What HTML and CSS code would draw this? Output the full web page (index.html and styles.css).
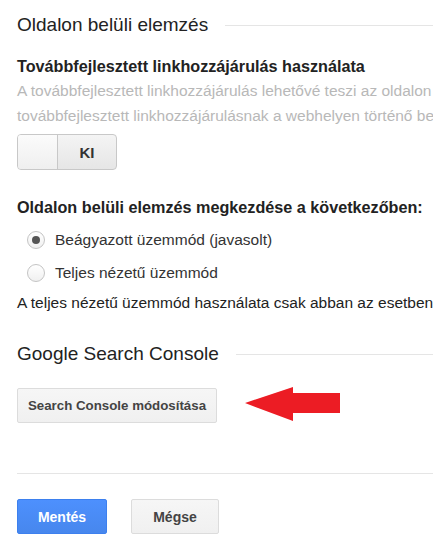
FILE: index.html
```html
<!DOCTYPE html>
<html lang="hu">
<head>
    <meta charset="UTF-8">
    <meta name="viewport" content="width=device-width, initial-scale=1.0">
    <title>Beállítások</title>
    <link rel="stylesheet" href="styles.css">
</head>
<body>

    <!-- Oldalon belüli elemzés -->
    <div class="section">
        <h2 class="section-title">Oldalon belüli elemzés</h2>

        <div class="label">Továbbfejlesztett linkhozzájárulás használata</div>
        <p class="hint">A továbbfejlesztett linkhozzájárulás lehetővé teszi az oldalon történő<br>továbbfejlesztett linkhozzájárulásnak a webhelyen történő beállítását</p>

        <div class="toggle">
            <span class="toggle-thumb"></span>
            <span class="toggle-text">KI</span>
        </div>

        <div class="label label-start">Oldalon belüli elemzés megkezdése a következőben:</div>
        <label class="radio-row">
            <span class="radio checked"></span>
            Beágyazott üzemmód (javasolt)
        </label>
        <label class="radio-row">
            <span class="radio"></span>
            Teljes nézetű üzemmód
        </label>
        <p class="note">A teljes nézetű üzemmód használata csak abban az esetben ajánlott</p>
    </div>

    <!-- Google Search Console -->
    <div class="section section-console">
        <h2 class="section-title">Google Search Console</h2>
        <div class="console-row">
            <button class="btn">Search Console módosítása</button>
            <svg class="arrow" width="96" height="36" viewBox="0 0 96 36">
                <path d="M0 16 L48 0 L48 6 L95 6 L95 26 L48 26 L48 34 Z" fill="#ec1c24"/>
            </svg>
        </div>
    </div>

    <div class="actions">
        <button class="btn btn-primary">Mentés</button>
        <button class="btn btn-cancel">Mégse</button>
    </div>

</body>
</html>
```

FILE: styles.css
```css
body {
    margin: 0;
    padding: 13px 0 0 17px;
    font-family: 'Liberation Sans', Arial, sans-serif;
    color: #222;
    background: #fff;
    overflow: hidden;
    width: 416px;
}

.section-title {
    display: flex;
    align-items: center;
    margin: 0;
    font-size: 19px;
    font-weight: normal;
    line-height: 24px;
    color: #222;
    white-space: nowrap;
}
.section-title::after {
    content: "";
    flex: 1;
    height: 1px;
    margin-left: 17px;
    background: #e5e5e5;
}

.label {
    margin-top: 19px;
    font-size: 16.2px;
    font-weight: bold;
    line-height: 20px;
    color: #222;
    white-space: nowrap;
}
.label-start {
    margin-top: 27px;
}

.hint {
    margin: 2px 0 0;
    font-size: 15.5px;
    line-height: 25px;
    color: #b8b8b8;
    white-space: nowrap;
}

.toggle {
    display: flex;
    width: 98px;
    height: 34px;
    margin-top: 6px;
    border: 1px solid #c8c8c8;
    border-radius: 4px;
    background: linear-gradient(#f4f4f4, #e6e6e6);
    box-sizing: content-box;
}
.toggle-thumb {
    width: 39px;
    border-right: 1px solid #c8c8c8;
    border-radius: 3px 0 0 3px;
    background: linear-gradient(#fbfbfb, #efefef);
}
.toggle-text {
    flex: 1;
    display: flex;
    align-items: center;
    justify-content: center;
    font-size: 15px;
    font-weight: bold;
    color: #333;
}

.radio-row {
    display: flex;
    align-items: center;
    height: 33px;
    padding-left: 10px;
    font-size: 15.5px;
    color: #333;
    white-space: nowrap;
}
.radio-row:first-of-type {
    margin-top: 6px;
}
.radio {
    position: relative;
    width: 16px;
    height: 16px;
    margin-right: 10px;
    border: 1px solid #c4c4c4;
    border-radius: 50%;
    background: linear-gradient(#ffffff, #f0f0f0);
}
.radio.checked::after {
    content: "";
    position: absolute;
    top: 4px;
    left: 4px;
    width: 8px;
    height: 8px;
    border-radius: 50%;
    background: #555;
}

.note {
    margin: 0;
    padding-top: 3px;
    font-size: 15.5px;
    line-height: 22px;
    color: #222;
    white-space: nowrap;
}

.section-console {
    margin-top: 28px;
}

.console-row {
    display: flex;
    align-items: center;
    margin-top: 21px;
}
.arrow {
    margin-left: 28px;
}

.btn {
    height: 35px;
    padding: 0;
    border: 1px solid #dcdcdc;
    border-radius: 2px;
    background: linear-gradient(#f6f6f6, #f0f0f0);
    font-family: 'Liberation Sans', Arial, sans-serif;
    font-size: 13.3px;
    font-weight: bold;
    color: #444;
    white-space: nowrap;
}
.console-row .btn {
    width: 200px;
}

.actions {
    display: flex;
    gap: 24px;
    margin-top: 50px;
    padding-top: 25px;
    border-top: 1px solid #e5e5e5;
}
.btn-primary {
    width: 90px;
    border-color: #3d80ee;
    background: linear-gradient(#4d90fe, #4787ed);
    color: #fff;
    font-size: 14px;
}
.btn-cancel {
    width: 88px;
    font-size: 14px;
}
```
